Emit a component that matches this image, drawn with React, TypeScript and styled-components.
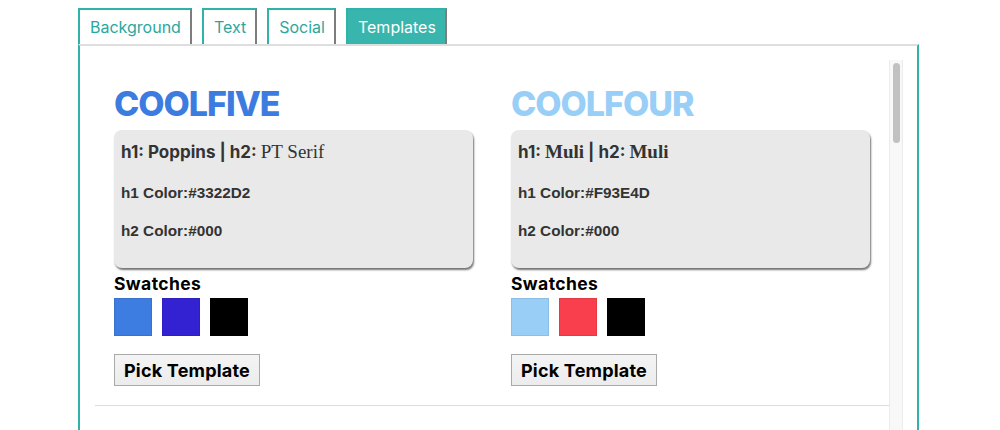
import React from 'react';
import styled, { createGlobalStyle } from 'styled-components';

const GlobalStyle = createGlobalStyle`
  html, body {
    margin: 0;
    padding: 0;
    background: #fff;
    overflow: hidden;
  }
  body {
    font-family: Inter, 'Noto Sans', sans-serif;
  }
`;

const HEAD_FONT = `Inter, 'Noto Sans', sans-serif`;
const TEAL = '#2fb3a9';

type Template = {
  name: string;
  titleColor: string;
  h1Font: string;
  h2Font: string;
  serifFonts: boolean;
  h1Color: string;
  h2Color: string;
  swatches: string[];
};

const templates: Template[] = [
  {
    name: 'COOLFIVE',
    titleColor: '#3c7ce0',
    h1Font: 'Poppins',
    h2Font: 'PT Serif',
    serifFonts: false,
    h1Color: '#3322D2',
    h2Color: '#000',
    swatches: ['#3d7ce0', '#3322d2', '#000000'],
  },
  {
    name: 'COOLFOUR',
    titleColor: '#99cef6',
    h1Font: 'Muli',
    h2Font: 'Muli',
    serifFonts: true,
    h1Color: '#F93E4D',
    h2Color: '#000',
    swatches: ['#99cff7', '#f93e4d', '#000000'],
  },
];

const tabs = ['Background', 'Text', 'Social', 'Templates'];

const Page = styled.div`
  width: 841px;
  margin-left: 78px;
  padding-top: 8px;
`;

const TabBar = styled.div`
  display: flex;
  gap: 10px;
  height: 36px;
`;

const Tab = styled.button<{ $active?: boolean }>`
  box-sizing: border-box;
  height: 36px;
  padding: 0 9px 0 10px;
  border: 2px solid ${TEAL};
  border-right-color: #7d7d7d;
  border-bottom: none;
  background: ${(p) => (p.$active ? '#38b5ac' : '#fff')};
  color: ${(p) => (p.$active ? '#fff' : '#2aa79d')};
  font-family: ${HEAD_FONT};
  font-size: 16px;
  font-weight: 400;
  cursor: pointer;
`;

const Panel = styled.div`
  box-sizing: border-box;
  height: 386px;
  border-top: 2px solid #dedede;
  border-left: 2px solid ${TEAL};
  border-right: 2px solid ${TEAL};
  padding: 14px 14px 0 15px;
`;

const ScrollArea = styled.div`
  display: flex;
  height: 370px;
`;

const Content = styled.div`
  flex: 1;
  overflow: hidden;
`;

const Track = styled.div`
  width: 14px;
  box-sizing: border-box;
  background: #f8f8f8;
  border-left: 1px solid #ececec;
  border-right: 1px solid #ececec;
  padding: 3px 2px 0 3px;
`;

const Thumb = styled.div`
  height: 80px;
  border-radius: 4px;
  background: #c1c1c1;
`;

const Row = styled.div`
  display: grid;
  grid-template-columns: 397px 397px;
  border-bottom: 1px solid #dcdcdc;
`;

const Card = styled.div`
  padding: 24px 0 19px 19px;
`;

const Title = styled.h1<{ $color: string }>`
  margin: 0 0 6px;
  font-family: ${HEAD_FONT};
  font-size: 34px;
  line-height: 40px;
  font-weight: 800;
  letter-spacing: -1px;
  color: ${(p) => p.$color};
`;

const InfoBox = styled.div`
  box-sizing: border-box;
  width: 359px;
  height: 138px;
  padding: 10px 7px 0;
  background: #e8e9e8;
  border-radius: 8px;
  box-shadow: 1px 2px 2px rgba(0, 0, 0, 0.55);
  color: #333;
`;

const FontLine = styled.div`
  font-size: 17px;
  line-height: 24px;
  margin-bottom: 19px;
  white-space: nowrap;
`;

const Label = styled.span`
  font-family: ${HEAD_FONT};
  font-weight: 700;
`;

const FontName = styled.span<{ $serif?: boolean; $bold?: boolean }>`
  font-family: ${(p) => (p.$serif ? `'Liberation Serif', serif` : HEAD_FONT)};
  font-weight: ${(p) => (p.$bold ? 700 : 400)};
  font-size: ${(p) => (p.$serif ? '19px' : '17px')};
`;

const ColorLine = styled.div`
  font-family: 'Liberation Sans', Arial, sans-serif;
  font-weight: 700;
  font-size: 15.3px;
  line-height: 20px;
  margin-bottom: 18px;
`;

const SwatchLabel = styled.div`
  margin-top: 5px;
  font-family: ${HEAD_FONT};
  font-weight: 700;
  font-size: 17.5px;
  line-height: 22px;
  letter-spacing: 0.4px;
  color: #000;
`;

const Swatches = styled.div`
  display: flex;
  gap: 10px;
  margin-top: 3px;
`;

const Swatch = styled.div<{ $color: string }>`
  width: 38px;
  height: 38px;
  box-sizing: border-box;
  border: 1px solid rgba(0, 0, 0, 0.08);
  background: ${(p) => p.$color};
`;

const PickButton = styled.button`
  display: block;
  margin-top: 18px;
  height: 32px;
  padding: 0 9px;
  border: 1px solid #a9a9a9;
  background: linear-gradient(#f4f4f4, #ececec);
  font-family: ${HEAD_FONT};
  font-weight: 700;
  font-size: 18px;
  letter-spacing: 0.2px;
  color: #000;
  cursor: pointer;
`;

function TemplateCard({ t }: { t: Template }) {
  return (
    <Card>
      <Title $color={t.titleColor}>{t.name}</Title>
      <InfoBox>
        <FontLine>
          <Label>h1: </Label>
          <FontName $serif={t.serifFonts} $bold>
            {t.h1Font}
          </FontName>
          <Label> | h2: </Label>
          <FontName $serif $bold={t.serifFonts}>
            {t.h2Font}
          </FontName>
        </FontLine>
        <ColorLine>h1 Color:{t.h1Color}</ColorLine>
        <ColorLine>h2 Color:{t.h2Color}</ColorLine>
      </InfoBox>
      <SwatchLabel>Swatches</SwatchLabel>
      <Swatches>
        {t.swatches.map((c, i) => (
          <Swatch key={i} $color={c} />
        ))}
      </Swatches>
      <PickButton>Pick Template</PickButton>
    </Card>
  );
}

export default function App() {
  return (
    <>
      <GlobalStyle />
      <Page>
        <TabBar>
          {tabs.map((tab) => (
            <Tab key={tab} $active={tab === 'Templates'}>
              {tab}
            </Tab>
          ))}
        </TabBar>
        <Panel>
          <ScrollArea>
            <Content>
              <Row>
                {templates.map((t) => (
                  <TemplateCard key={t.name} t={t} />
                ))}
              </Row>
            </Content>
            <Track>
              <Thumb />
            </Track>
          </ScrollArea>
        </Panel>
      </Page>
    </>
  );
}
